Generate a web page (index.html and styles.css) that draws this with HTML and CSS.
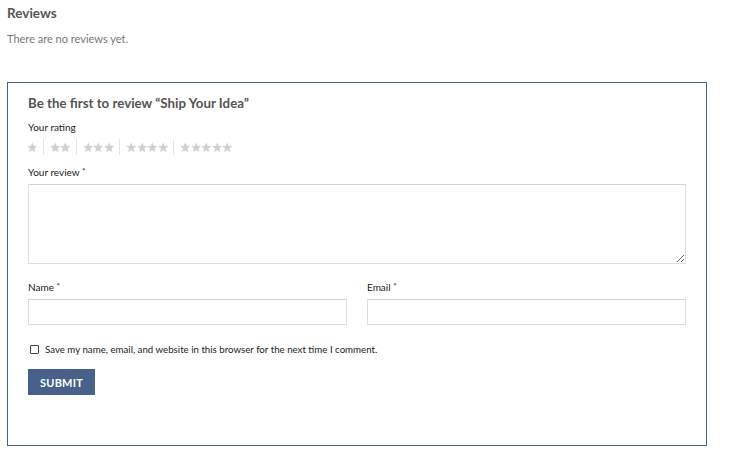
FILE: index.html
```html
<!DOCTYPE html>
<html>
<head>
<meta charset="utf-8">
<link rel="stylesheet" href="styles.css">
</head>
<body>
<div class="page">
  <h2 class="reviews-title">Reviews</h2>
  <p class="no-reviews">There are no reviews yet.</p>
  <div class="review-box">
    <h3 class="reply-title">Be the first to review “Ship Your Idea”</h3>
    <div class="label rating-label">Your rating</div>
    <div class="stars">
      <span class="group"><svg viewBox="0 0 10 10" class="star"><path d="M5 0.2 6.3 3.4 9.8 3.6 7.1 5.8 8 9.4 5 7.5 2 9.4 2.9 5.8 0.2 3.6 3.7 3.4Z"/></svg></span>
      <span class="group"><svg viewBox="0 0 10 10" class="star"><path d="M5 0.2 6.3 3.4 9.8 3.6 7.1 5.8 8 9.4 5 7.5 2 9.4 2.9 5.8 0.2 3.6 3.7 3.4Z"/></svg><svg viewBox="0 0 10 10" class="star"><path d="M5 0.2 6.3 3.4 9.8 3.6 7.1 5.8 8 9.4 5 7.5 2 9.4 2.9 5.8 0.2 3.6 3.7 3.4Z"/></svg></span>
      <span class="group"><svg viewBox="0 0 10 10" class="star"><path d="M5 0.2 6.3 3.4 9.8 3.6 7.1 5.8 8 9.4 5 7.5 2 9.4 2.9 5.8 0.2 3.6 3.7 3.4Z"/></svg><svg viewBox="0 0 10 10" class="star"><path d="M5 0.2 6.3 3.4 9.8 3.6 7.1 5.8 8 9.4 5 7.5 2 9.4 2.9 5.8 0.2 3.6 3.7 3.4Z"/></svg><svg viewBox="0 0 10 10" class="star"><path d="M5 0.2 6.3 3.4 9.8 3.6 7.1 5.8 8 9.4 5 7.5 2 9.4 2.9 5.8 0.2 3.6 3.7 3.4Z"/></svg></span>
      <span class="group"><svg viewBox="0 0 10 10" class="star"><path d="M5 0.2 6.3 3.4 9.8 3.6 7.1 5.8 8 9.4 5 7.5 2 9.4 2.9 5.8 0.2 3.6 3.7 3.4Z"/></svg><svg viewBox="0 0 10 10" class="star"><path d="M5 0.2 6.3 3.4 9.8 3.6 7.1 5.8 8 9.4 5 7.5 2 9.4 2.9 5.8 0.2 3.6 3.7 3.4Z"/></svg><svg viewBox="0 0 10 10" class="star"><path d="M5 0.2 6.3 3.4 9.8 3.6 7.1 5.8 8 9.4 5 7.5 2 9.4 2.9 5.8 0.2 3.6 3.7 3.4Z"/></svg><svg viewBox="0 0 10 10" class="star"><path d="M5 0.2 6.3 3.4 9.8 3.6 7.1 5.8 8 9.4 5 7.5 2 9.4 2.9 5.8 0.2 3.6 3.7 3.4Z"/></svg></span>
      <span class="group"><svg viewBox="0 0 10 10" class="star"><path d="M5 0.2 6.3 3.4 9.8 3.6 7.1 5.8 8 9.4 5 7.5 2 9.4 2.9 5.8 0.2 3.6 3.7 3.4Z"/></svg><svg viewBox="0 0 10 10" class="star"><path d="M5 0.2 6.3 3.4 9.8 3.6 7.1 5.8 8 9.4 5 7.5 2 9.4 2.9 5.8 0.2 3.6 3.7 3.4Z"/></svg><svg viewBox="0 0 10 10" class="star"><path d="M5 0.2 6.3 3.4 9.8 3.6 7.1 5.8 8 9.4 5 7.5 2 9.4 2.9 5.8 0.2 3.6 3.7 3.4Z"/></svg><svg viewBox="0 0 10 10" class="star"><path d="M5 0.2 6.3 3.4 9.8 3.6 7.1 5.8 8 9.4 5 7.5 2 9.4 2.9 5.8 0.2 3.6 3.7 3.4Z"/></svg><svg viewBox="0 0 10 10" class="star"><path d="M5 0.2 6.3 3.4 9.8 3.6 7.1 5.8 8 9.4 5 7.5 2 9.4 2.9 5.8 0.2 3.6 3.7 3.4Z"/></svg></span>
    </div>
    <div class="label review-label">Your review <span class="req">*</span></div>
    <textarea class="review-text"></textarea>
    <div class="fields">
      <div class="field">
        <div class="label">Name <span class="req">*</span></div>
        <input class="text-input" type="text">
      </div>
      <div class="field">
        <div class="label">Email <span class="req">*</span></div>
        <input class="text-input" type="email">
      </div>
    </div>
    <label class="consent"><input type="checkbox" class="check"><span>Save my name, email, and website in this browser for the next time I comment.</span></label>
    <button class="submit" type="button">SUBMIT</button>
  </div>
</div>
</body>
</html>
```
FILE: styles.css
```css
* { box-sizing: border-box; }
html, body { margin: 0; padding: 0; background: #fff; }
body { font-family: Lato, "Open Sans", sans-serif; color: #333; }
.page { padding: 5px 0 0 7px; }
.reviews-title {
  margin: 0;
  font-size: 13.5px;
  line-height: 17px;
  font-weight: 700;
  color: #555;
}
.no-reviews {
  margin: 10px 0 0;
  font-size: 11px;
  line-height: 14px;
  color: #777;
}
.review-box {
  margin-top: 36px;
  width: 700px;
  border: 1px solid #47618a;
  padding: 10px 20px 50px;
}
.reply-title {
  margin: 0;
  font-size: 13.3px;
  line-height: 20px;
  font-weight: 700;
  color: #555;
}
.label {
  font-size: 10px;
  line-height: 14px;
  color: #222;
}
.req {
  color: #222;
  font-size: 8px;
  vertical-align: top;
  line-height: 12px;
}
.rating-label { margin-top: 7px; }
.stars {
  display: flex;
  align-items: center;
  margin-top: 7px;
  height: 12px;
  margin-left: -1px;
}
.group {
  display: flex;
  align-items: center;
  padding: 0 5px 0 6px;
  border-left: 1px solid #e4e4e4;
  height: 16px;
}
.group:first-child { border-left: 0; padding-left: 0; }
.star { width: 10.5px; height: 11px; fill: #d0d0d0; }
.review-label { margin-top: 12px; }
.review-text {
  display: block;
  margin-top: 5px;
  width: 100%;
  height: 80px;
  border: 1px solid #ddd;
  border-top-color: #d4d4d4;
  padding: 4px;
  font-family: inherit;
}
.fields {
  display: grid;
  grid-template-columns: 1fr 1fr;
  column-gap: 20px;
  margin-top: 16px;
}
.text-input {
  display: block;
  margin-top: 5px;
  width: 100%;
  height: 26px;
  border: 1px solid #ddd;
  border-top-color: #d4d4d4;
  padding: 4px;
}
.consent {
  display: flex;
  align-items: center;
  margin-top: 17px;
  height: 14px;
  font-size: 9.7px;
  color: #222;
}
.check {
  appearance: none;
  -webkit-appearance: none;
  margin: 0 6px 0 2px;
  width: 9px;
  height: 9px;
  border: 1px solid #444;
  border-radius: 1px;
  background: #fff;
}
.submit {
  display: block;
  margin-top: 13px;
  width: 67px;
  height: 26px;
  border: 0;
  padding: 0;
  background: #47618a;
  color: #fff;
  font-family: inherit;
  font-size: 11px;
  font-weight: 700;
  letter-spacing: 0.2px;
}
```
